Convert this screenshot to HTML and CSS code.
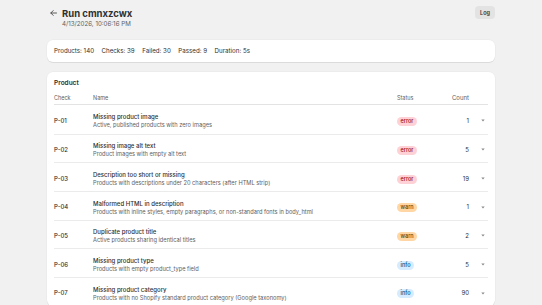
FILE: index.html
```html
<!DOCTYPE html>
<html lang="en">
<head>
<meta charset="utf-8">
<title>Run cmnxzcwx</title>
<link rel="stylesheet" href="styles.css">
</head>
<body>
<div class="page">
  <header class="page-header">
    <button class="back" aria-label="Back">
      <svg width="7" height="6" viewBox="0 0 7 6"><path d="M6.5 3H0.8M3.2 0.6L0.8 3l2.4 2.4" fill="none" stroke="#4a4a4a" stroke-width="0.9" stroke-linecap="round" stroke-linejoin="round"/></svg>
    </button>
    <div class="title-block">
      <h1 class="title">Run cmnxzcwx</h1>
      <div class="subtitle">4/13/2026, 10:06:16 PM</div>
    </div>
    <button class="log-btn">Log</button>
  </header>

  <section class="card stats">
    <span>Products: 140</span>
    <span>Checks: 39</span>
    <span>Failed: 30</span>
    <span>Passed: 9</span>
    <span>Duration: 5s</span>
  </section>

  <section class="card checks">
    <h2 class="card-title">Product</h2>
    <div class="table">
      <div class="row head">
        <div>Check</div>
        <div>Name</div>
        <div>Status</div>
        <div class="num">Count</div>
        <div></div>
      </div>
      <div class="row">
        <div class="code">P-01</div>
        <div class="name"><div class="n-title">Missing product image</div><div class="n-desc">Active, published products with zero images</div></div>
        <div><span class="badge error">error</span></div>
        <div class="num">1</div>
        <div class="chev"><svg width="4" height="3" viewBox="0 0 4 3"><path d="M0.3 0.4h3.4L2 2.6z" fill="#8a8a8a"/></svg></div>
      </div>
      <div class="row">
        <div class="code">P-02</div>
        <div class="name"><div class="n-title">Missing image alt text</div><div class="n-desc">Product images with empty alt text</div></div>
        <div><span class="badge error">error</span></div>
        <div class="num">5</div>
        <div class="chev"><svg width="4" height="3" viewBox="0 0 4 3"><path d="M0.3 0.4h3.4L2 2.6z" fill="#8a8a8a"/></svg></div>
      </div>
      <div class="row">
        <div class="code">P-03</div>
        <div class="name"><div class="n-title">Description too short or missing</div><div class="n-desc">Products with descriptions under 20 characters (after HTML strip)</div></div>
        <div><span class="badge error">error</span></div>
        <div class="num">19</div>
        <div class="chev"><svg width="4" height="3" viewBox="0 0 4 3"><path d="M0.3 0.4h3.4L2 2.6z" fill="#8a8a8a"/></svg></div>
      </div>
      <div class="row">
        <div class="code">P-04</div>
        <div class="name"><div class="n-title">Malformed HTML in description</div><div class="n-desc">Products with inline styles, empty paragraphs, or non-standard fonts in body_html</div></div>
        <div><span class="badge warn">warn</span></div>
        <div class="num">1</div>
        <div class="chev"><svg width="4" height="3" viewBox="0 0 4 3"><path d="M0.3 0.4h3.4L2 2.6z" fill="#8a8a8a"/></svg></div>
      </div>
      <div class="row">
        <div class="code">P-05</div>
        <div class="name"><div class="n-title">Duplicate product title</div><div class="n-desc">Active products sharing identical titles</div></div>
        <div><span class="badge warn">warn</span></div>
        <div class="num">2</div>
        <div class="chev"><svg width="4" height="3" viewBox="0 0 4 3"><path d="M0.3 0.4h3.4L2 2.6z" fill="#8a8a8a"/></svg></div>
      </div>
      <div class="row">
        <div class="code">P-06</div>
        <div class="name"><div class="n-title">Missing product type</div><div class="n-desc">Products with empty product_type field</div></div>
        <div><span class="badge info">info</span></div>
        <div class="num">5</div>
        <div class="chev"><svg width="4" height="3" viewBox="0 0 4 3"><path d="M0.3 0.4h3.4L2 2.6z" fill="#8a8a8a"/></svg></div>
      </div>
      <div class="row">
        <div class="code">P-07</div>
        <div class="name"><div class="n-title">Missing product category</div><div class="n-desc">Products with no Shopify standard product category (Google taxonomy)</div></div>
        <div><span class="badge info">info</span></div>
        <div class="num">90</div>
        <div class="chev"><svg width="4" height="3" viewBox="0 0 4 3"><path d="M0.3 0.4h3.4L2 2.6z" fill="#8a8a8a"/></svg></div>
      </div>
    </div>
  </section>
</div>
</body>
</html>
```
FILE: styles.css
```css
* { box-sizing: border-box; }
html, body { margin: 0; padding: 0; }
body {
  background: #f1f1f1;
  font-family: Inter, "Noto Sans", sans-serif;
  color: #303030;
  font-size: 6.2px;
  line-height: 10px;
}
.page {
  width: 448px;
  margin: 0 auto;
}
.page-header {
  display: flex;
  align-items: flex-start;
  padding-top: 6px;
  margin-bottom: 12px;
}
.back {
  width: 12px;
  height: 12px;
  margin-top: 1px;
  padding: 0;
  border: 0;
  background: none;
  display: flex;
  align-items: center;
  justify-content: center;
}
.title-block {
  margin-left: 3px;
  padding-top: 1px;
  flex: 1;
}
.title {
  margin: 0;
  font-size: 9.5px;
  line-height: 13px;
  font-weight: 700;
  color: #303030;
}
.subtitle {
  font-size: 6.2px;
  line-height: 8px;
  color: #616161;
}
.log-btn {
  height: 13px;
  padding: 0 5px;
  border: 0;
  border-radius: 4px;
  background: #e3e3e3;
  font-family: inherit;
  font-size: 5.5px;
  font-weight: 600;
  color: #303030;
}
.card {
  background: #fff;
  border-radius: 6px;
  box-shadow: 0 1px 0 rgba(26, 26, 26, 0.08), 0 0 0 0.5px rgba(26, 26, 26, 0.04);
}
.stats {
  display: flex;
  gap: 7.5px;
  padding: 6px 7px;
  height: 22px;
}
.checks {
  margin-top: 10px;
  padding: 6px 7px 0;
}
.card-title {
  margin: 0;
  font-size: 6.5px;
  line-height: 10px;
  font-weight: 600;
}
.row {
  display: grid;
  grid-template-columns: 39px 304px 44px 28px 19px;
  align-items: center;
  height: 28.67px;
  padding-top: 3px;
  border-top: 1px solid #ebebeb;
}
.row.head {
  border-top: 0;
  height: 17px;
  padding-top: 3px;
  border-bottom: 1px solid #e3e3e3;
  font-size: 5.5px;
  color: #616161;
}
.row.head + .row { border-top: 0; }
.code { font-size: 6px; font-weight: 500; }
.n-title { font-size: 6px; font-weight: 500; line-height: 9px; }
.n-desc { font-size: 5.7px; line-height: 8px; color: #616161; }
.num { text-align: right; font-size: 6px; }
.chev { display: flex; justify-content: flex-end; padding-right: 3px; }
.badge {
  display: inline-block;
  font-size: 5.5px;
  line-height: 9px;
  padding: 0 3.5px;
  border-radius: 5px;
  font-weight: 500;
}
.badge.error { background: #fed1d7; color: #8e0b21; }
.badge.warn { background: #ffd6a4; color: #5e4200; }
.badge.info { background: #d5ebff; color: #00527c; }
```
